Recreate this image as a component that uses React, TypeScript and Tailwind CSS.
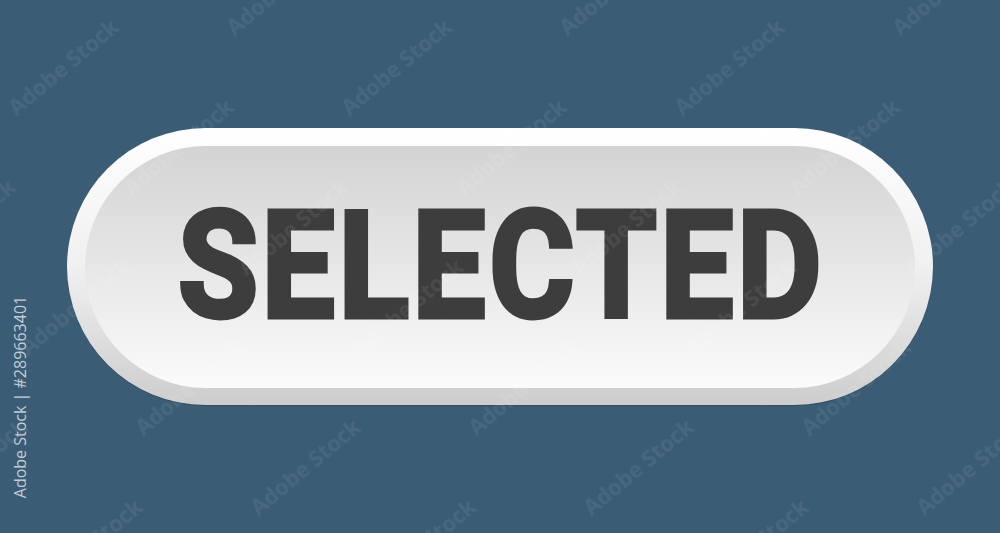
import React from 'react';

const marks: { x: number; y: number }[] = [];
for (let r = 0; r < 8; r++) {
  const y = r * 80 - 30;
  const x0 = ((r * 115) % 333) - 120;
  for (let x = x0; x < 1000; x += 333) marks.push({ x, y });
}

export default function App() {
  return (
    <div className="relative w-full h-[533px] bg-[#3a5c74] overflow-hidden flex items-center justify-center font-['Roboto',sans-serif]">
      <div className="w-[866px] h-[277px] rounded-full p-[18px] pb-[17px] bg-gradient-to-b from-[#ffffff] via-[#f0f0f0] to-[#cdcdcd] shadow-[0_1px_0_rgba(0,0,0,0.15)]">
        <div className="w-full h-full rounded-full bg-gradient-to-b from-[#d3d3d3] to-[#fbfbfb] flex items-center justify-center">
          <span className="text-[148px] leading-none font-bold text-[#3d3d3d] [-webkit-text-stroke:5px_#3d3d3d] tracking-[4px] pl-[4px] scale-x-[0.88] inline-block">
            SELECTED
          </span>
        </div>
      </div>

      {marks.map((m, i) => (
        <span
          key={i}
          className="absolute text-[22px] font-bold text-white/[0.07] -rotate-[40deg] whitespace-nowrap pointer-events-none font-['Open_Sans',sans-serif]"
          style={{ left: m.x, top: m.y }}
        >
          Adobe Stock
        </span>
      ))}

      <span className="absolute left-[-81px] top-[387px] -rotate-90 text-[16px] leading-[20px] text-[#c3ccd3] whitespace-nowrap font-['Open_Sans',sans-serif]">
        Adobe Stock | #289663401
      </span>
    </div>
  );
}
